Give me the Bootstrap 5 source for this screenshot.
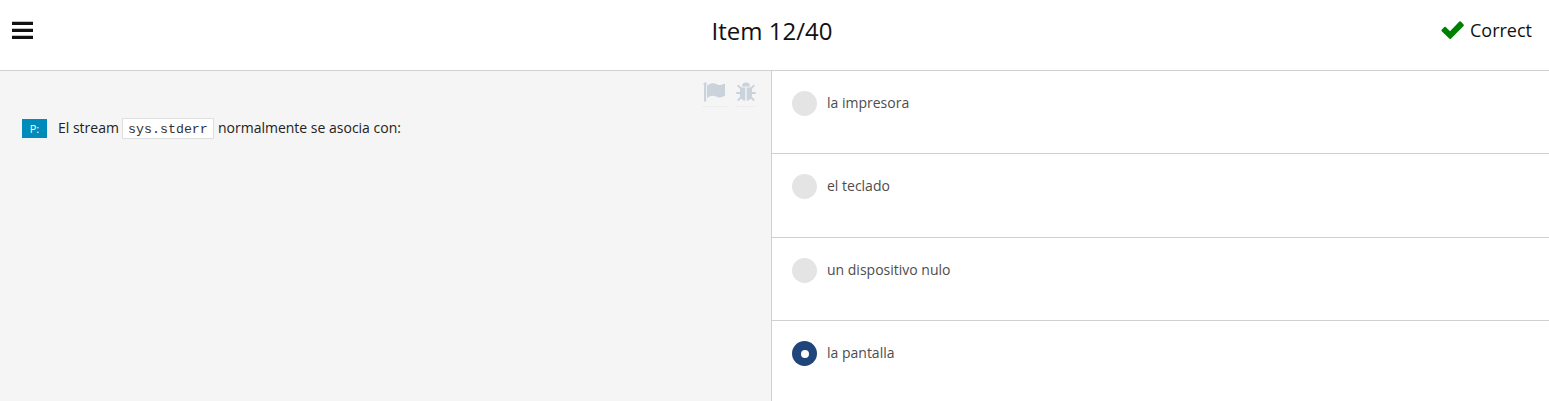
<!DOCTYPE html>
<html lang="es">
<head>
<meta charset="utf-8">
<meta name="viewport" content="width=device-width, initial-scale=1">
<title>Item 12/40</title>
<link href="https://cdn.jsdelivr.net/npm/bootstrap@5.3.0/dist/css/bootstrap.min.css" rel="stylesheet">
<style>
body{font-family:"Open Sans","Noto Sans",sans-serif;font-size:14px;color:#222;height:100vh;overflow:hidden}
.topbar{height:71px;border-bottom:1px solid #d0d0ce;padding:0 17px 9px 12px}
.side{flex:1 1 0}
.menu-btn{width:23px;height:19px;line-height:0;margin-left:-1px}
.item-title{font-size:24px;line-height:34px;color:#111}
.status{font-size:18px;line-height:24px;color:#111;padding-bottom:2px}
.status svg{margin-right:5px;margin-top:1px}
.question{width:772px;background:#f5f5f5;border-right:1px solid #d0d0ce;padding:10px 15px 0 22px}
.tools{height:26px;gap:6px}
.tools a{line-height:0;height:26px;border-bottom:1px dotted #e6e8ec}
.prompt{margin-top:10px;height:22px;line-height:20px}
.tag{width:25px;height:19px;background:#008cba;color:#fff;font-size:11px;line-height:19px;margin-right:11px}
.snippet{font-family:"Courier New","Liberation Mono",monospace;font-size:13.3px;line-height:21px;height:21px;width:92px;border:1px solid #dfdfdf;background:#fff;color:#333;margin:0 4px 0 3px}
.choice{height:83.4px;border-bottom:1px solid #d0d0ce;padding:20px 20px 0;color:#4d4d4d}
.dot{width:25px;height:25px;border-radius:50%;background:#e4e4e4;margin-right:10px}
.dot.chosen{background:#20457a}
.dot.chosen::after{content:"";width:8px;height:8px;border-radius:50%;background:#fff}
.choice-text{line-height:23px}
</style>
</head>
<body class="d-flex flex-column bg-white">
<header class="topbar d-flex align-items-center flex-shrink-0">
  <div class="side d-flex">
    <a href="#" class="menu-btn" aria-label="Menu"><svg width="23" height="19" viewBox="0 0 23 19" fill="#111"><path d="M1 .8h21V4H1zM1 7.8h21V11H1zM1 14.8h21V18H1z"/></svg></a>
  </div>
  <div class="item-title">Item 12/40</div>
  <div class="side d-flex justify-content-end align-items-center status">
    <svg width="25" height="20" viewBox="0 0 25 20" fill="#008000"><path d="M1.700 9.800 4.300 7.100q.7-.6 1.400 0l4.300 4.100L19.400 1.600q.7-.6 1.400 0l2.800 2.900q.6.7 0 1.400L10.900 18.700q-.7.6-1.400 0L1.700 11.200q-.6-.7 0-1.400z"/></svg>
    <span>Correct</span>
  </div>
</header>
<main class="d-flex flex-grow-1">
  <section class="question flex-shrink-0">
    <div class="tools d-flex justify-content-end">
      <a href="#" aria-label="Flag"><svg width="27" height="22" viewBox="0 0 27 22" fill="#cad2dc"><path d="M1 4A1.600 1.600 0 1 1 3.200 4V20.500H1V4zM4 4.500C9 1.600 11 2 14 3.500 17 4.800 19.500 3.800 22 2.600V14.500C18 17 16 17 13 15.500 10 14.100 8 14.300 4 16.700z"/></svg></a>
      <a href="#" aria-label="Report"><svg width="20" height="22" viewBox="0 0 20 22" fill="#cad2dc"><path d="M6 5.500a4 4 0 0 1 8 0zM4 6.500h5.300V19.800C6 19.500 4 16.800 4 13.500zM10.700 6.500H16V13.500c0 3.300-2 6-5.300 6.300z"/><path d="M2.200 4.700 5 7.500M17.800 4.700 15 7.500M1 12H5M15 12h4M2.400 19 5.300 16M17.600 19 14.700 16" stroke="#cad2dc" stroke-width="1.900" stroke-linecap="round"/></svg></a>
    </div>
    <div class="prompt d-flex align-items-center">
      <span class="tag text-center">P:</span><span>El stream</span><code class="snippet text-center">sys.stderr</code><span>normalmente se asocia con:</span>
    </div>
  </section>
  <section class="flex-grow-1">
    <div class="choice d-flex align-items-start"><span class="dot"></span><span class="choice-text">la impresora</span></div>
    <div class="choice d-flex align-items-start"><span class="dot"></span><span class="choice-text">el teclado</span></div>
    <div class="choice d-flex align-items-start"><span class="dot"></span><span class="choice-text">un dispositivo nulo</span></div>
    <div class="choice d-flex align-items-start"><span class="dot chosen d-flex align-items-center justify-content-center"></span><span class="choice-text">la pantalla</span></div>
  </section>
</main>
<script src="https://cdn.jsdelivr.net/npm/bootstrap@5.3.0/dist/js/bootstrap.bundle.min.js"></script>
</body>
</html>
